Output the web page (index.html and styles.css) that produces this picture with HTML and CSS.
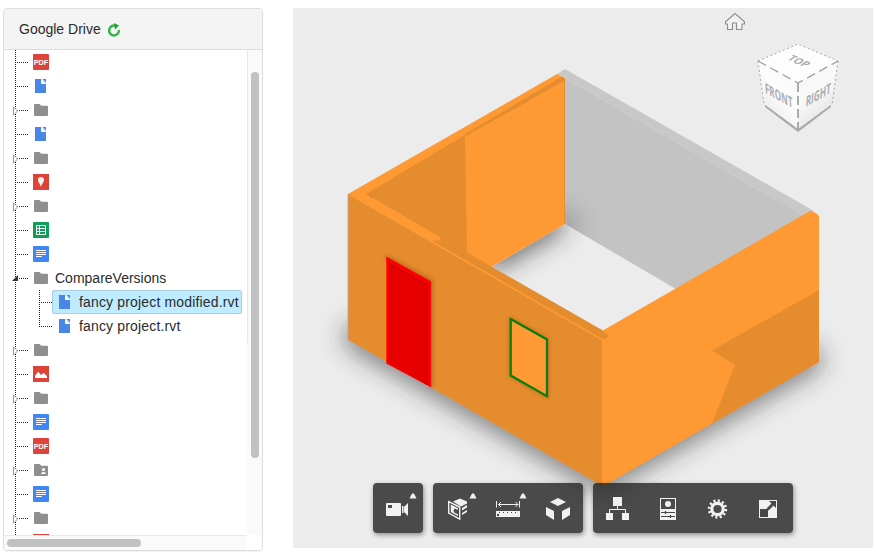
FILE: index.html
```html
<!DOCTYPE html>
<html lang="en">
<head>
<meta charset="utf-8">
<title>Model viewer</title>
<link rel="stylesheet" href="styles.css">
</head>
<body>
<svg class="sprite" aria-hidden="true">
  <symbol id="file" viewBox="0 0 16 16"><path d="M2 1h6l5 5v9H2z" fill="#4a86e8"/><path d="M8 1h5v5z" fill="#dce8fb"/><path d="M8 1v5h5z" fill="#fff"/><path d="M9.500 1h3.500v3.500z" fill="#4a86e8"/></symbol>
  <symbol id="folder" viewBox="0 0 16 16"><path d="M1 3.200Q1 2 2 2h4.600L8.300 3.700H14q1 0 1 1V13q0 1-1 1H2q-1 0-1-1z" fill="#8f8f8f"/></symbol>
  <symbol id="shared" viewBox="0 0 16 16"><path d="M1 3.200Q1 2 2 2h4.600L8.300 3.700H14q1 0 1 1V13q0 1-1 1H2q-1 0-1-1z" fill="#8f8f8f"/><path d="M8 12q0-2 2.500-2t2.500 2z" fill="#fff"/><circle cx="10.500" cy="7.500" r="1.600" fill="#fff"/></symbol>
  <symbol id="map" viewBox="0 0 16 16"><rect width="16" height="16" fill="#db4437"/><path d="M8 13C7.500 10 5 8.500 5 6a3 3 0 0 1 6 0c0 2.500-2.500 4-3 7z" fill="#f1f1f1"/></symbol>
  <symbol id="sheet" viewBox="0 0 16 16"><rect width="16" height="16" rx="1" fill="#0f9d58"/><path d="M3.500 3.500h9v9h-9zM3 6.500h10M3 9.500h10M6.500 3v10" fill="none" stroke="#fff"/></symbol>
  <symbol id="gdoc" viewBox="0 0 16 16"><rect width="16" height="16" rx="1" fill="#4285f4"/><path d="M3 4.500h10M3 6.500h10M3 8.500h10M3 10.500h6" stroke="#fff"/></symbol>
  <symbol id="image" viewBox="0 0 16 16"><rect width="16" height="16" fill="#db4437"/><path d="M2 12V9.700l3.200-4L8 9l2.500-2L14 10v2z" fill="#fff"/></symbol>
  <symbol id="closed" viewBox="0 0 6 10"><path d="M.5.8v8.400L4.700 5z" fill="#fff" stroke="#999"/></symbol>
  <symbol id="opened" viewBox="0 0 6 6"><path d="M6 0v6H0z" fill="#333"/></symbol>
</svg>

<main class="app">
  <section class="panel">
    <header class="panel-head">Google Drive
      <svg class="refresh" viewBox="0 0 14 14"><path d="M8 2.700A4.900 4.900 0 1 0 11.900 7" fill="none" stroke="#37b34a" stroke-width="2.500"/><path d="M7 0l5 2.400-4 4z" fill="#20a02e"/></svg>
    </header>
    <div class="content">
      <ul class="tree">
        <li class="row"><span class="icon pdf">PDF</span></li>
        <li class="row"><svg class="icon"><use href="#file"/></svg></li>
        <li class="row"><svg class="arrow"><use href="#closed"/></svg><svg class="icon"><use href="#folder"/></svg></li>
        <li class="row"><svg class="icon"><use href="#file"/></svg></li>
        <li class="row"><svg class="arrow"><use href="#closed"/></svg><svg class="icon"><use href="#folder"/></svg></li>
        <li class="row"><svg class="icon"><use href="#map"/></svg></li>
        <li class="row"><svg class="arrow"><use href="#closed"/></svg><svg class="icon"><use href="#folder"/></svg></li>
        <li class="row"><svg class="icon"><use href="#sheet"/></svg></li>
        <li class="row"><svg class="icon"><use href="#gdoc"/></svg></li>
        <li class="row"><svg class="arrow open"><use href="#opened"/></svg><svg class="icon"><use href="#folder"/></svg><span class="label">CompareVersions</span></li>
        <li>
          <ul class="children">
            <li class="child"><span class="item selected"><svg class="icon"><use href="#file"/></svg><span class="label">fancy project modified.rvt</span></span></li>
            <li class="child"><span class="item"><svg class="icon"><use href="#file"/></svg><span class="label">fancy project.rvt</span></span></li>
          </ul>
        </li>
        <li class="row"><svg class="arrow"><use href="#closed"/></svg><svg class="icon"><use href="#folder"/></svg></li>
        <li class="row"><svg class="icon"><use href="#image"/></svg></li>
        <li class="row"><svg class="arrow"><use href="#closed"/></svg><svg class="icon"><use href="#folder"/></svg></li>
        <li class="row"><svg class="icon"><use href="#gdoc"/></svg></li>
        <li class="row"><span class="icon pdf">PDF</span></li>
        <li class="row"><svg class="arrow"><use href="#closed"/></svg><svg class="icon"><use href="#shared"/></svg></li>
        <li class="row"><svg class="icon"><use href="#gdoc"/></svg></li>
        <li class="row"><svg class="arrow"><use href="#closed"/></svg><svg class="icon"><use href="#folder"/></svg></li>
        <li class="row"><svg class="icon"><use href="#map"/></svg></li>
      </ul>
      <div class="vtrack"><div class="vthumb"></div></div>
      <div class="htrack"><div class="hthumb"></div></div>
    </div>
  </section>

  <section class="viewer">
    <svg class="scene" viewBox="293 8 580 540">
      <defs>
        <filter id="blur" filterUnits="userSpaceOnUse" x="250" y="0" width="680" height="620"><feGaussianBlur stdDeviation="12"/></filter>
        <filter id="soft" filterUnits="userSpaceOnUse" x="370" y="240" width="200" height="170"><feGaussianBlur stdDeviation="2"/></filter>
        <clipPath id="floor"><path d="M565 224L676 289 602 331 491 267z"/></clipPath>
        <clipPath id="back"><path d="M565 78L803 214 676 289 565 224z"/></clipPath>
        <linearGradient id="faceL" x1="1" y1="0" x2=".3" y2="1"><stop offset="0" stop-color="#f8f8f8"/><stop offset=".55" stop-color="#fcfcfc"/><stop offset="1" stop-color="#e5e5e5"/></linearGradient>
        <linearGradient id="faceR" x1="0" y1="0" x2=".5" y2="1"><stop offset="0" stop-color="#f3f3f3"/><stop offset=".5" stop-color="#fafafa"/><stop offset="1" stop-color="#e2e2e2"/></linearGradient>
      </defs>
      <!-- ground shadow -->
      <path d="M358 337L602 477 808 359" fill="none" stroke="#333" stroke-opacity=".6" stroke-width="28" stroke-linejoin="round" stroke-linecap="round" filter="url(#blur)"/>
      <!-- floor and back wall -->
      <path d="M565 224L676 289 602 331 491 267z" fill="#ececec"/>
      <g clip-path="url(#floor)"><path d="M486 260L559 217" stroke="#333" stroke-opacity=".7" stroke-width="28" filter="url(#blur)"/></g>
      <path d="M557 74L565 69 814 211 807 218 565 78z" fill="#c8c8c8"/>
      <path d="M565 78L804 216 676 289 565 224z" fill="#c3c3c3"/>
      <g clip-path="url(#back)"><circle cx="562" cy="225" r="16" fill="#777" opacity=".55" filter="url(#blur)"/></g>
      <!-- left wall -->
      <path d="M348 194L557 74 565 78V224L491 267 366 196z" fill="#ff9933"/>
      <path d="M366 194L465 135 467 253z" fill="#e58c2e"/>
      <path d="M465 134L558 79 562 77 565 78.500 564 81 466 136z" fill="#e58c2e"/>
      <path d="M366 194l7 3-5 .5z" fill="#b36b20"/>
      <path d="M564.500 79V224" stroke="#e58c2e"/>
      <!-- front wall -->
      <path d="M348 194L602 340V486.500L348 340z" fill="#e58c2e"/>
      <path d="M348 194l18 0L441 237.500 609 334 602 340z" fill="#e58c2e"/>
      <path d="M348 194l18 0 74 43 0 3-11 1z" fill="#ff9933"/>
      <path d="M429 240L602 339.500" stroke="#ff9933" stroke-width="1.800"/>
      <path d="M348 194V340L602 486" fill="none" stroke="#aaa" stroke-width=".8"/>
      <!-- right wall -->
      <path d="M602 331L809 211.500Q811 210.500 813 211.500L817 214Q819 215 819 217V362L602 487V340L609 336z" fill="#ff9933"/>
      <path d="M819 290V362L712 423.500 735 365 712 350.500z" fill="#e58c2e"/>
      <path d="M590 327.500L602 331 610 336 604 339.500z" fill="#e58c2e"/>
      <!-- door -->
      <path d="M386 257L431 281V387" fill="none" stroke="#8a4b10" stroke-width="3" opacity=".65" filter="url(#soft)"/>
      <path d="M386.300 256.500L431 281.300V387.300L386.300 363.500z" fill="#f00"/>
      <path d="M389.500 263L427 284V385L389.500 363.500z" fill="#e80000"/>
      <path d="M389.800 363V263.500L427 284.500V385" fill="none" stroke="#c20000" stroke-width="1.200"/>
      <!-- window -->
      <path d="M510.500 319L547 339.500V396.500L510.500 375.500z" fill="none" stroke="#8a4b10" stroke-width="3" opacity=".45" filter="url(#soft)"/>
      <path d="M510.700 319L547 339.500V396.200L510.700 375.500z" fill="#ff9933" stroke="#067d06" stroke-width="2.200"/>
      <!-- home -->
      <path d="M727.500 24v5.500h5V23h4v6.500h5.500V24h2.500v-2.200L735 13.500l-9.500 8.300V24z" fill="#f2f2f2" stroke="#8d8d8d" stroke-width="1.100"/>
      <!-- view cube -->
      <path d="M765 104L798 128 831 104V107L798 132 765 107z" fill="#aaa"/>
      <path d="M758 61L798 44 838 61 798 83z" fill="#fdfdfd"/>
      <path d="M758 61L798 83V129L764 104z" fill="url(#faceL)"/>
      <path d="M838 61L798 83V129L832 104z" fill="url(#faceR)"/>
      <path d="M758 61L798 44 838 61M758 61L764 105M838 61L832 105" fill="none" stroke="#a6a9ad" stroke-dasharray="2 2.500"/>
      <path d="M758 61L798 83 838 61" fill="none" stroke="#a1a4a8" stroke-width="1.400" stroke-dasharray="9 5"/>
      <path d="M798 83V129" stroke="#a1a4a8" stroke-width="1.800" stroke-dasharray="9 4"/>
      <g class="cube-text">
        <text transform="matrix(.84 .38 -.72 .54 796 63.500)" textLength="22" lengthAdjust="spacingAndGlyphs">TOP</text>
        <text transform="matrix(.84 .47 .08 1.200 779 100.500)" textLength="33" lengthAdjust="spacingAndGlyphs">FRONT</text>
        <text transform="matrix(.84 -.47 -.08 1.200 818 100)" textLength="30" lengthAdjust="spacingAndGlyphs">RIGHT</text>
      </g>
    </svg>

    <nav class="toolbar">
      <div class="group">
        <button class="tool" aria-label="Camera"><svg viewBox="0 0 50 50"><path d="M43.500 15.500h-7l2-4 1.500-1.500 1.500 1.500z"/><path fill-rule="evenodd" d="M14 20h13q1 0 1 1v11q0 1-1 1H14q-1 0-1-1V21q0-1 1-1zM15 22v3h4v-3zM29 23h1.500v7H29zM31 24l4-4v13l-4-4z"/></svg></button>
      </div>
      <div class="group">
        <button class="tool" aria-label="Section"><svg viewBox="0 0 50 50"><path d="M43.500 15.500h-7l2-4 1.500-1.500 1.500 1.500z"/><path d="M20 18.500l7-3 7 3v2l-6 3zM29 25l5-3v2.500l-5 3zM29 30l5-3v2l-5 3z"/><path d="M15.700 18.700l11 5.300V36l-11-6z" fill="none" stroke="#f1f1f1" stroke-width="1.400"/><path fill-rule="evenodd" d="M17.800 21.500l7 3.500v8l-7-4zM24.800 27l-3-1.500-1.500 2 1.500 2.500 3 1z"/></svg></button>
        <button class="tool" aria-label="Measure"><svg viewBox="0 0 50 50"><path d="M43.500 15.500h-7l2-4 1.500-1.500 1.500 1.500z"/><path d="M13.500 18v6.500M36.500 18v6.500M15.500 21.500h19.500M18 19l-2.500 2.500L18 24M32.500 19l2.500 2.500-2.500 2.500" fill="none" stroke="#f1f1f1"/><path fill-rule="evenodd" d="M13 28h24v6H13zM16 29v1h1v-1zM20 29v1h1v-1zM24 29v1h1v-1zM28 29v1h1v-1zM32 29v1h1v-1zM14 31v2h2v-2z"/></svg></button>
        <button class="tool" aria-label="Explode"><svg viewBox="0 0 50 50"><path d="M25 15l8 4-8 4-8-4zM13 24l8 4v9l-8-5zM37 24l-8 4v9l8-5z"/></svg></button>
      </div>
      <div class="group">
        <button class="tool" aria-label="Model structure"><svg viewBox="0 0 50 50"><path d="M20 14h9v9h-9zM13 30h7v7h-7zM29 30h7v7h-7z"/><path d="M24.500 22v4.500M16.500 30v-3.500h16V30" fill="none" stroke="#f1f1f1"/></svg></button>
        <button class="tool" aria-label="Properties"><svg viewBox="0 0 50 50"><path fill-rule="evenodd" d="M17 15h16v22H17zM18 16v10h14V16z"/><circle cx="25" cy="21" r="3"/><path d="M18 29.500h14M18 33.500h14M22.500 28v3M27.500 32v3" stroke="#484848" stroke-width="1.200"/></svg></button>
        <button class="tool" aria-label="Settings"><svg viewBox="0 0 50 50"><circle cx="24.500" cy="26" r="5.700" fill="none" stroke="#f1f1f1" stroke-width="3.200"/><circle cx="24.500" cy="26" r="8.300" fill="none" stroke="#f1f1f1" stroke-width="2.800" stroke-dasharray="2.100 2.245"/></svg></button>
        <button class="tool" aria-label="Full screen"><svg viewBox="0 0 50 50"><path d="M16 17h18v18H16z"/><path d="M17 26h8v8h-8zM33 18v7l-2.500-2.500-5 5-2-2 5-5L26 18z" fill="#484848"/></svg></button>
      </div>
    </nav>
  </section>
</main>
</body>
</html>
```
FILE: styles.css
```css
* { box-sizing: border-box; }
body { margin: 0; background: #fff; color: #2b2b2b; font: 14px/24px "Liberation Sans", Arial, sans-serif; overflow: hidden; }
ul { margin: 0; padding: 0; list-style: none; }
.sprite { position: absolute; width: 0; height: 0; }
.app { display: flex; gap: 30px; height: 559px; padding: 8px 3px; }
.panel { display: flex; flex-direction: column; width: 260px; height: 543px; border: 1px solid #ddd; border-radius: 4px; overflow: hidden; box-shadow: 0 1px 1px rgba(0, 0, 0, .05); }
.panel-head { display: flex; align-items: center; gap: 6px; flex: 0 0 41px; padding-left: 15px; background: #f4f4f4; border-bottom: 1px solid #ddd; }
.refresh { width: 14px; height: 14px; margin-top: 1px; }
.content { display: grid; grid-template: 485px 15px / 243px 15px; }

.tree { overflow: hidden; background: repeating-linear-gradient(#222 0 1px, transparent 1px 2px) 11px 0 / 1px 100% no-repeat; }
.row { display: flex; align-items: center; position: relative; height: 24px; padding-left: 29px; background: repeating-linear-gradient(90deg, #222 0 1px, transparent 1px 2px) 13px 12px / 12px 1px no-repeat; }
.icon { display: block; flex: none; width: 16px; height: 16px; }
.arrow { position: absolute; left: 9px; top: 8px; width: 6px; height: 10px; }
.arrow.open { left: 8px; top: 9px; width: 6px; height: 6px; }
.pdf { border-radius: 1px; background: #db4437; color: #fff; font: bold 7.3px/17px "Liberation Sans", Arial, sans-serif; text-align: center; }
.label { margin-left: 6px; white-space: nowrap; }
.children { padding-left: 35px; background: repeating-linear-gradient(#222 0 1px, transparent 1px 2px) 35px 0 / 1px 37px no-repeat; }
.child { display: flex; height: 24px; padding-left: 13px; background: repeating-linear-gradient(90deg, #222 0 1px, transparent 1px 2px) 2px 12px / 11px 1px no-repeat; }
.item { display: flex; align-items: center; height: 24px; padding: 0 0 0 4px; border: 1px solid transparent; border-radius: 2px; line-height: 22px; letter-spacing: .16px; }
.item.selected { width: 190px; background: #beebff; border-color: #a9cfdd; }

.vtrack { position: relative; padding: 22px 3px 0 4px; background: linear-gradient(#e8e8e8, #e8e8e8) 0 0 / 1px 293px no-repeat, #fafafa; }
.vthumb { width: 8px; height: 386px; border-radius: 4px; background: #c1c1c1; }
.htrack { padding: 3px; border-top: 1px solid #e8e8e8; background: #fafafa; }
.hthumb { width: 134px; height: 8px; border-radius: 4px; background: #c1c1c1; }

.viewer { position: relative; width: 580px; height: 540px; background: #ececec; }
.scene { display: block; width: 580px; height: 540px; }
.cube-text { font: bold 12px "Open Sans", "Noto Sans", sans-serif; fill: #a9adb2; text-anchor: middle; }
.toolbar { position: absolute; left: 80px; bottom: 15px; display: flex; gap: 10px; }
.group { display: flex; border-radius: 4px; background: rgba(34, 34, 34, .8); box-shadow: 1px 2px 5px rgba(0, 0, 0, .4); }
.tool { width: 50px; height: 50px; padding: 0; border: 0; background: none; }
.tool svg { display: block; width: 50px; height: 50px; fill: #f1f1f1; }
```
